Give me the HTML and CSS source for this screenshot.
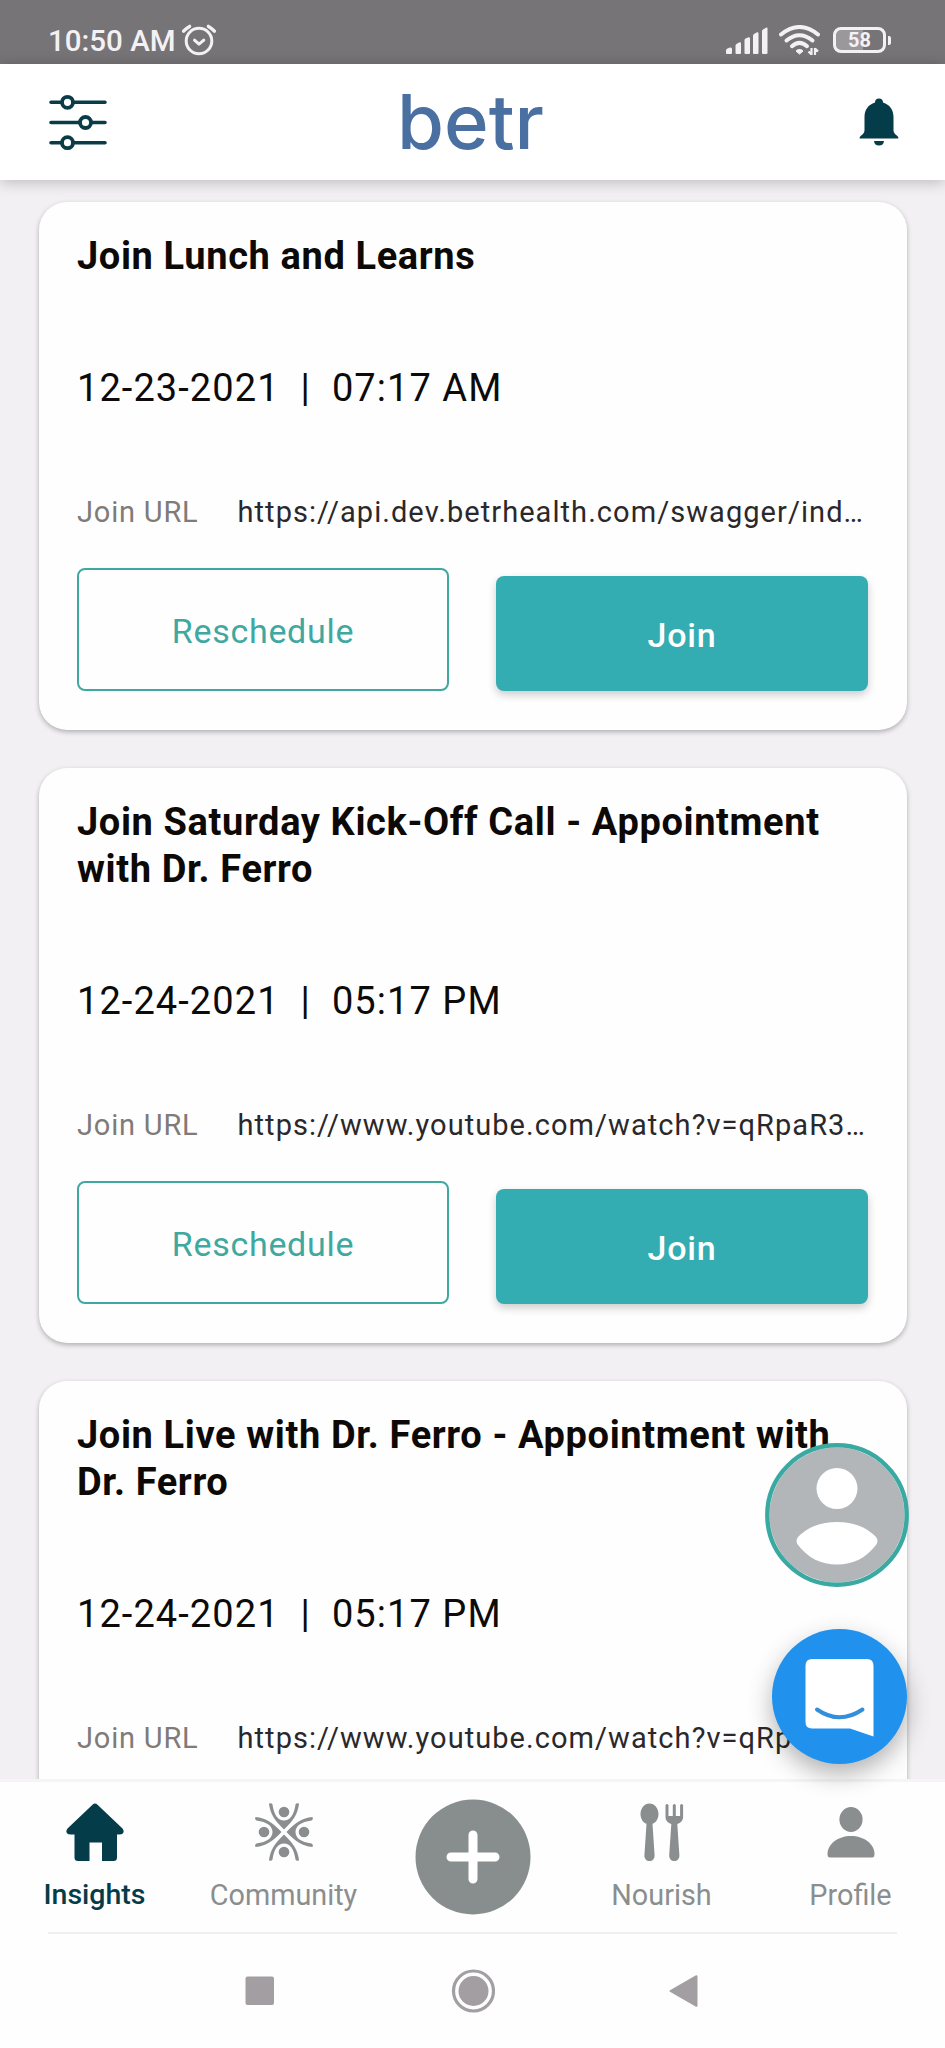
FILE: index.html
```html
<!DOCTYPE html>
<html lang="en">
<head>
<meta charset="utf-8">
<title>betr – Insights</title>
<link rel="stylesheet" href="styles.css">
</head>
<body>
<div class="phone">
  <div class="status-bar">
    <div class="status-left">
      <span class="clock">10:50 AM</span>
      <svg class="alarm" width="36" height="34" viewBox="0 0 36 34" fill="none" stroke="#f4f1f5" stroke-linecap="round" stroke-linejoin="round">
        <circle cx="18" cy="18" r="12.8" stroke-width="3"/>
        <path d="M13.5 17.2l4.5 4 4.8-4" stroke-width="3"/>
        <path d="M2.6 8.2Q5 5.300 8.600 3.400M27.400 3.400Q31 5.300 33.400 8.200" stroke-width="3.400"/>
      </svg>
    </div>
    <div class="status-right">
      <svg width="42" height="28" viewBox="0 0 42 28" fill="#f4f1f5">
        <path d="M0 26V23.500Q0 22 1.500 21.400L4 20.500Q6 20 6 22V26Q6 27 5 27H1Q0 27 0 26z"/>
        <path d="M9.500 26V18.500Q9.500 17.500 10.500 17L13.500 15.300Q15 15 15 16.500V26Q15 27 14 27H10.500Q9.500 27 9.500 26z"/>
        <path d="M18.500 26V13Q18.500 12 19.500 11.500L22.500 10.200Q24 10 24 11.500V26Q24 27 23 27H19.500Q18.500 27 18.500 26z"/>
        <path d="M27 26V8.500Q27 7.500 28 7L31 5.300Q32.500 5 32.500 6.500V26Q32.500 27 31.500 27H28Q27 27 27 26z"/>
        <path d="M36 26V4Q36 3 37 2.500L40 .7Q41.500 0 41.500 1.500V26Q41.500 27 40.500 27H37Q36 27 36 26z"/>
      </svg>
      <svg class="wifi" width="41" height="31" viewBox="0 0 41 31" fill="none" stroke="#f4f1f5" stroke-width="4" stroke-linecap="round">
        <path d="M2 9.500Q20.500-5.500 39 9.500"/>
        <path d="M7.500 15.500Q20.500 5 33.500 15.500"/>
        <path d="M13 21.200Q20.500 14.500 28 21.200"/>
        <path d="M20.500 24.500q3 0 3.500 1.600l-3.500 3-3.500-3q.5-1.600 3.500-1.600z" fill="#f4f1f5" stroke-width="1"/>
        <path d="M32.500 23v7M32.500 29.500l-3-3M36 30v-7M36 23.500l3 3" stroke-width="2.200" stroke-linecap="butt"/>
      </svg>
      <div class="battery"><span class="battery-body">58</span><span class="battery-nub"></span></div>
    </div>
  </div>

  <header class="app-bar">
    <svg width="58" height="58" viewBox="0 0 58 58" fill="none" stroke="#0a3c47" stroke-width="3.600" stroke-linecap="round">
      <path d="M2 9.300H12.500M24.500 9.300H56M2 29.500H30.500M42.500 29.500H56M2 49.700H12.500M24.500 49.700H56"/>
      <circle cx="18.500" cy="9.300" r="5.500" stroke-width="3.800"/>
      <circle cx="36.500" cy="29.500" r="5.500" stroke-width="3.800"/>
      <circle cx="18.500" cy="49.700" r="5.500" stroke-width="3.800"/>
    </svg>
    <svg class="logo" width="150" height="94" viewBox="0 0 150 94">
      <text x="1" y="74" textLength="147" lengthAdjust="spacingAndGlyphs">betr</text>
    </svg>
    <svg width="40" height="48" viewBox="0 0 40 48" fill="#043c49">
      <path d="M20 .5c2.500 0 4 1.600 4 4 6.800 2 10.500 7.500 10.500 14.500V32c0 2.500 1.200 3.800 3 5.200 1.300 1 2.300 2.300 1.800 3.300H.7c-.5-1 .5-2.300 1.800-3.300 1.800-1.400 3-2.700 3-5.200V19C5.500 12 9.200 6.500 16 4.500c0-2.400 1.500-4 4-4z"/>
      <path d="M15 43H25Q24.500 47.500 20 47.500T15 43z"/>
    </svg>
  </header>

  <main class="feed">
    <article class="card">
      <h2 class="card-title">Join Lunch and Learns</h2>
      <p class="card-date">12-23-2021&nbsp; |&nbsp; 07:17 AM</p>
      <div class="card-url"><span class="url-label">Join URL</span><span class="url-value">https://api.dev.betrhealth.com/swagger/ind…</span></div>
      <div class="actions"><button class="btn btn-outline">Reschedule</button><button class="btn btn-solid">Join</button></div>
    </article>
    <article class="card">
      <h2 class="card-title">Join Saturday Kick-Off Call - Appointment with Dr. Ferro</h2>
      <p class="card-date">12-24-2021&nbsp; |&nbsp; 05:17 PM</p>
      <div class="card-url"><span class="url-label">Join URL</span><span class="url-value">https://www.youtube.com/watch?v=qRpaR3…</span></div>
      <div class="actions"><button class="btn btn-outline">Reschedule</button><button class="btn btn-solid">Join</button></div>
    </article>
    <article class="card">
      <h2 class="card-title">Join Live with Dr. Ferro - Appointment with Dr. Ferro</h2>
      <p class="card-date">12-24-2021&nbsp; |&nbsp; 05:17 PM</p>
      <div class="card-url"><span class="url-label">Join URL</span><span class="url-value">https://www.youtube.com/watch?v=qRpaR3…</span></div>
      <div class="actions"><button class="btn btn-outline">Reschedule</button><button class="btn btn-solid">Join</button></div>
    </article>
  </main>

  <nav class="tabs">
    <div class="tab tab-active">
      <svg width="58" height="58" viewBox="0 0 58 58" fill="#043c49">
        <path d="M26.500 1.800Q29-.6 31.500 1.800L56.500 25.500Q58.500 28 57 30.200 56 31.500 53 31.500H51V54.500Q51 58 47.500 58H36V39.500H23.500V58H12Q8.500 58 8.500 54.500V31.500H5Q2 31.500 1 30.200-.5 28 1.500 25.500z"/>
      </svg>
      <span class="tab-label">Insights</span>
    </div>
    <div class="tab">
      <svg width="58" height="58" viewBox="-29 -29 58 58" fill="#8a8e8f">
        <g id="person">
          <circle cx="0" cy="-20" r="5.300"/>
          <path d="M-15-28.500Q-12.500-29.500-11.500-27.500C-10-17-6-11.500 0-11.500S10-17 11.500-27.500Q12.500-29.500 15-28.500C14-18 9-11 0-2.500-9-11-14-18-15-28.500z"/>
        </g>
        <use href="#person" transform="rotate(90)"/>
        <use href="#person" transform="rotate(180)"/>
        <use href="#person" transform="rotate(270)"/>
      </svg>
      <span class="tab-label">Community</span>
    </div>
    <div class="tab tab-add">
      <svg width="116" height="116" viewBox="0 0 116 116">
        <circle cx="58" cy="58" r="57.500" fill="#888e8e"/>
        <path d="M58 36V80M36 58H80" stroke="#fff" stroke-width="9" stroke-linecap="round"/>
      </svg>
    </div>
    <div class="tab">
      <svg width="58" height="58" viewBox="0 0 58 58" fill="#8a8e8f">
        <path d="M16.500.5c5 0 9 4.700 9 10.500 0 4.800-2.500 8.500-6 9.800L21.600 52.500C21.800 60 11.200 60 11.400 52.500L13.500 20.800C10 19.500 7.500 15.800 7.500 11 7.500 5.200 11.500.5 16.500.5z"/>
        <path d="M32.500 2.300q1.500-2.600 3 0V13h4.300V2.300q1.500-2.600 3 0V13h4.300V2.300q1.500-2.600 3 0V14c0 3.500-2.500 6-5.800 7L46.400 52.500C46.600 60 36 60 36.200 52.500L38.300 21c-3.300-1-5.800-3.500-5.800-7z"/>
      </svg>
      <span class="tab-label">Nourish</span>
    </div>
    <div class="tab">
      <svg width="58" height="58" viewBox="0 0 58 58" fill="#8a8e8f">
        <ellipse cx="29" cy="16.500" rx="11.600" ry="12.500"/>
        <path d="M5.500 51C5.500 41 16 33 29 33S52.500 41 52.500 51Q52.500 54.500 50 54.500H8Q5.500 54.500 5.500 51z"/>
      </svg>
      <span class="tab-label">Profile</span>
    </div>
  </nav>

  <div class="system-nav">
    <svg width="44" height="44" viewBox="0 0 44 44"><rect x="6.500" y="7.500" width="28.500" height="28.500" rx="2" fill="#a29ea2"/></svg>
    <svg width="44" height="44" viewBox="0 0 44 44"><circle cx="22.500" cy="22" r="20" fill="none" stroke="#a29ea2" stroke-width="3.200"/><circle cx="22.500" cy="22" r="15" fill="#a29ea2"/></svg>
    <svg width="44" height="44" viewBox="0 0 44 44"><path d="M7.500 22L33.500 7.200V36.800z" fill="#a29ea2" stroke="#a29ea2" stroke-width="2" stroke-linejoin="round"/></svg>
  </div>

  <svg class="fab-avatar" width="144" height="144" viewBox="0 0 144 144">
    <circle cx="72" cy="72" r="71" fill="#fff"/>
    <circle cx="72" cy="72" r="67.500" fill="#b3b6b9"/>
    <circle cx="72" cy="72" r="69.700" fill="none" stroke="#3aa9a2" stroke-width="4.400"/>
    <circle cx="72" cy="45.500" r="20.500" fill="#fff"/>
    <path d="M33 94C44 83 57 79 72 79S100 83 111 94Q114 98 111 102C101 115 88 121.500 72 121.500S43 115 33 102Q30 98 33 94z" fill="#fff"/>
  </svg>
  <div class="fab-chat">
    <svg width="70" height="78" viewBox="0 0 70 78">
      <path d="M7 0H62Q68.500 0 68.500 7V77.500L45 69.500H7Q.5 69.500.5 63V7Q.5 0 7 0z" fill="#fff"/>
      <path d="M12 50.500Q34.500 66 57.500 50.500" fill="none" stroke="#338fda" stroke-width="4" stroke-linecap="round"/>
    </svg>
  </div>
</div>
</body>
</html>
```
FILE: styles.css
```css
* { box-sizing: border-box; }
body { margin: 0; font-family: Roboto, "Liberation Sans", sans-serif; }
h2, p { margin: 0; }
svg { display: block; flex: none; }

.phone {
  position: relative;
  display: flex;
  flex-direction: column;
  width: 945px;
  height: 2048px;
  overflow: hidden;
  background: #f2f0f3;
}

.status-bar {
  display: flex;
  justify-content: space-between;
  flex: none;
  height: 64px;
  padding: 23px 56px 0 48px;
  background: #777478;
  color: #f4f1f5;
}
.status-left { display: flex; gap: 5px; }
.clock { font-size: 29.5px; line-height: 36px; font-weight: 500; }
.status-right { display: flex; align-items: flex-start; padding-top: 4px; }
.wifi { margin: -2px 13px 0 11px; }
.battery { display: flex; align-items: center; gap: 2px; }
.battery-body {
  width: 53px;
  height: 26px;
  border: 3px solid #f4f1f5;
  border-radius: 8px;
  background: linear-gradient(90deg, #9b989c 58%, #777478 58%);
  font-size: 20px;
  line-height: 21px;
  font-weight: 700;
  text-align: center;
}
.battery-nub { width: 3px; height: 9px; border-radius: 0 2px 2px 0; background: #f4f1f5; }
.status-right { margin-right: -2px; }

.app-bar {
  position: relative;
  z-index: 1;
  display: flex;
  align-items: center;
  justify-content: space-between;
  flex: none;
  height: 116px;
  padding: 0 46px 0 49px;
  background: #fff;
  box-shadow: 0 2px 14px rgba(0, 0, 0, .24);
}
.logo { margin-right: 24px; }
.logo text { font: 500 76px Inter, sans-serif; fill: #4a70a2; }

.feed {
  display: flex;
  flex-direction: column;
  flex: 1;
  gap: 38px;
  min-height: 0;
  padding: 22px 38px 0 39px;
  overflow: hidden;
}
.card {
  flex: none;
  padding: 31px 39px 39px 38px;
  border-radius: 28px;
  background: #fefefe;
  box-shadow: 0 2px 5px rgba(0, 0, 0, .28);
}
.card-title {
  color: #0d0907;
  font-size: 38px;
  line-height: 47px;
  font-weight: 700;
  letter-spacing: .62px;
}
.card-date {
  margin-top: 85px;
  color: #0d0b09;
  font-size: 38px;
  line-height: 46px;
  letter-spacing: 1.07px;
}
.card-url {
  display: flex;
  margin-top: 83px;
  font-size: 29px;
  line-height: 36px;
  white-space: nowrap;
}
.url-label { width: 160.5px; color: #807b78; letter-spacing: .8px; }
.url-value { color: #2a282b; letter-spacing: 1.06px; }
.actions {
  display: grid;
  grid-template-columns: 1fr 1fr;
  gap: 47px;
  align-items: end;
  margin-top: 38px;
}
.btn {
  padding: 0;
  border: 0;
  border-radius: 8px;
  font-family: inherit;
  font-size: 34px;
}
.btn-outline {
  height: 123px;
  padding-top: 2px;
  border: 2px solid #3fa8a1;
  background: #fefefe;
  color: #3fa8a1;
  letter-spacing: .7px;
}
.btn-solid {
  height: 115px;
  padding-top: 3px;
  background: #33adb1;
  color: #fff;
  font-weight: 500;
  letter-spacing: .8px;
  box-shadow: 0 4px 9px rgba(0, 0, 0, .2);
}

.tabs {
  display: grid;
  grid-template-columns: repeat(5, 1fr);
  flex: none;
  height: 155px;
  padding-top: 21px;
  border-top: 3px solid #f6f4f7;
  background: linear-gradient(#f0eef1, #f0eef1) 48px 100% / 849px 2px no-repeat #fefefe;
}
.tab {
  display: flex;
  flex-direction: column;
  align-items: center;
  gap: 17px;
  color: #8a8e8f;
}
.tab-label { font-size: 28.8px; line-height: 34px; }
.tab-active { color: #043c49; }
.tab-active .tab-label { font-weight: 500; font-size: 28.5px; }
.tab-add { margin-top: -4px; }

.system-nav {
  display: flex;
  justify-content: center;
  gap: 168px;
  flex: none;
  height: 114px;
  padding-top: 35px;
  background: #fefefe;
}

.fab-avatar { position: absolute; left: 765px; top: 1443px; }
.fab-chat {
  position: absolute;
  left: 772px;
  top: 1629px;
  display: flex;
  width: 135px;
  height: 135px;
  padding: 30px 0 0 33px;
  border-radius: 50%;
  background: #2191ee;
  box-shadow: 0 10px 24px rgba(0, 0, 0, .3);
}
```
